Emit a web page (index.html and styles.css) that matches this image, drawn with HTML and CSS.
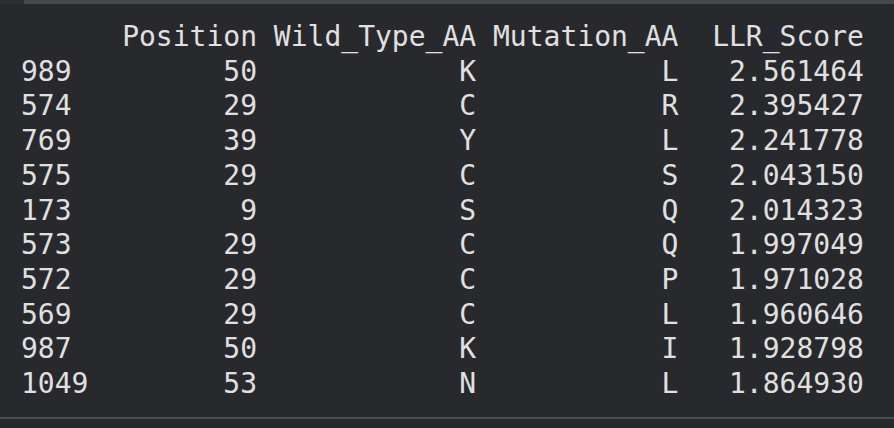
FILE: index.html
```html
<!DOCTYPE html>
<html lang="en">
<head>
  <meta charset="UTF-8">
  <title>Output</title>
  <link rel="stylesheet" href="styles.css">
</head>
<body>

<div class="scroll-strip">
  <div class="strip-left"></div>
  <div class="strip-right"></div>
</div>

<div class="output-area">
<pre class="output-text">      Position Wild_Type_AA Mutation_AA  LLR_Score
989         50            K           L   2.561464
574         29            C           R   2.395427
769         39            Y           L   2.241778
575         29            C           S   2.043150
173          9            S           Q   2.014323
573         29            C           Q   1.997049
572         29            C           P   1.971028
569         29            C           L   1.960646
987         50            K           I   1.928798
1049        53            N           L   1.864930</pre>
</div>

<div class="cell-footer"></div>

</body>
</html>
```

FILE: styles.css
```css
body {
  margin: 0;
  background-color: #28292c;
  overflow: hidden;
}
.scroll-strip {
  display: flex;
  height: 4px;
}
.strip-left {
  width: 24px;
  background-color: #2e2f32;
}
.strip-right {
  flex: 1;
  background-color: #48494c;
}
.output-area {
  padding: 16px 0 15px 21px;
  border-bottom: 2px solid #4a4b4e;
}
.output-text {
  margin: 0;
  font-family: "DejaVu Sans Mono", monospace;
  font-size: 28px;
  line-height: 34.7px;
  color: #e0e0e0;
}
.cell-footer {
  height: 10px;
}
```
